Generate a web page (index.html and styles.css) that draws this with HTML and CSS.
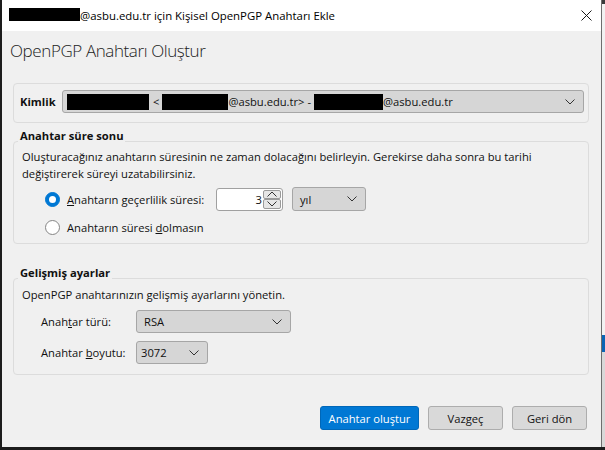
FILE: index.html
```html
<!DOCTYPE html>
<html lang="tr">
<head>
  <meta charset="UTF-8">
  <title>OpenPGP Anahtarı Oluştur</title>
  <link rel="stylesheet" href="styles.css">
</head>
<body>
<div class="screen">
  <div class="window">

    <!-- Title bar -->
    <div class="titlebar">
      <span class="redact redact-title"></span>
      <span class="title">@asbu.edu.tr için Kişisel OpenPGP Anahtarı Ekle</span>
      <svg class="close" width="11" height="11" viewBox="0 0 11 11">
        <path d="M0.5 0.5 L10.5 10.5 M10.5 0.5 L0.5 10.5" stroke="#1a1a1a" stroke-width="1"/>
      </svg>
    </div>

    <div class="dialog">
      <h1>OpenPGP Anahtarı Oluştur</h1>

      <!-- Identity -->
      <div class="group identity">
        <span class="identity-label">Kimlik</span>
        <div class="select identity-select">
          <span class="redact redact-name"></span>
          <span class="lt">&lt;</span>
          <span class="redact redact-user"></span>
          <span>@asbu.edu.tr&gt; -</span>
          <span class="redact redact-user2"></span>
          <span>@asbu.edu.tr</span>
          <svg class="chevron" width="10" height="6" viewBox="0 0 10 6"><path d="M0.5 0.5 L5 5 L9.5 0.5" fill="none" stroke="#333" stroke-width="1"/></svg>
        </div>
      </div>

      <!-- Expiry -->
      <div class="section-title">Anahtar süre sonu</div>
      <div class="group expiry">
        <p>Oluşturacağınız anahtarın süresinin ne zaman dolacağını belirleyin. Gerekirse daha sonra bu tarihi<br>değiştirerek süreyi uzatabilirsiniz.</p>
        <div class="radio-row first">
          <span class="radio checked"><span class="dot"></span></span>
          <span class="radio-label"><u>A</u>nahtarın geçerlilik süresi:</span>
          <div class="number">
            <span class="number-value">3</span>
            <span class="spin">
              <span class="spin-btn"><svg width="10" height="6" viewBox="0 0 10 6"><path d="M0.5 5.5 L5 1 L9.5 5.5" fill="none" stroke="#333" stroke-width="1"/></svg></span>
              <span class="spin-btn"><svg width="10" height="6" viewBox="0 0 10 6"><path d="M0.5 0.5 L5 5 L9.5 0.5" fill="none" stroke="#333" stroke-width="1"/></svg></span>
            </span>
          </div>
          <div class="select unit-select">
            <span>yıl</span>
            <svg class="chevron" width="10" height="6" viewBox="0 0 10 6"><path d="M0.5 0.5 L5 5 L9.5 0.5" fill="none" stroke="#333" stroke-width="1"/></svg>
          </div>
        </div>
        <div class="radio-row second">
          <span class="radio"></span>
          <span>Anahtarın süresi <u>d</u>olmasın</span>
        </div>
      </div>

      <!-- Advanced -->
      <div class="section-title advanced-title">Gelişmiş ayarlar</div>
      <div class="group advanced">
        <p>OpenPGP anahtarınızın gelişmiş ayarlarını yönetin.</p>
        <div class="field-row">
          <span class="field-label">Anah<u>t</u>ar türü:</span>
          <div class="select type-select">
            <span>RSA</span>
            <svg class="chevron" width="10" height="6" viewBox="0 0 10 6"><path d="M0.5 0.5 L5 5 L9.5 0.5" fill="none" stroke="#333" stroke-width="1"/></svg>
          </div>
        </div>
        <div class="field-row">
          <span class="field-label">Anahtar <u>b</u>oyutu:</span>
          <div class="select size-select">
            <span>3072</span>
            <svg class="chevron" width="10" height="6" viewBox="0 0 10 6"><path d="M0.5 0.5 L5 5 L9.5 0.5" fill="none" stroke="#333" stroke-width="1"/></svg>
          </div>
        </div>
      </div>

      <!-- Buttons -->
      <div class="buttons">
        <button class="btn btn-primary">Anahtar oluştur</button>
        <button class="btn btn-cancel">Vazgeç</button>
        <button class="btn btn-back">Geri dön</button>
      </div>
    </div>
  </div>

  <!-- whatever is behind the dialog -->
  <div class="backdrop">
    <div class="backdrop-top"></div>
    <div class="backdrop-blue"></div>
    <div class="backdrop-rest"></div>
  </div>
</div>
</body>
</html>
```

FILE: styles.css
```css
body {
  margin: 0;
  background: #1c1c1c;
  font-family: "Open Sans", "Noto Sans", sans-serif;
  font-size: 11.2px;
  color: #111;
}

.screen {
  display: flex;
  height: 450px;
  overflow: hidden;
}

.window {
  margin-left: 2px;
  width: 599px;
  height: 447px;
  border-right: 1px solid #6e6e6e;
  background: #f0f0f0;
  display: flex;
  flex-direction: column;
}

.backdrop {
  flex: 1;
  height: 447px;
  display: flex;
  flex-direction: column;
}

.backdrop-top {
  height: 331px;
  background: #f2f2f2;
  border-top: 4px solid #3a3a3a;
}

.backdrop-blue {
  height: 17px;
  background: #0a64b4;
}

.backdrop-rest {
  flex: 1;
  background: #d8d8d8;
}

/* title bar */
.titlebar {
  height: 31px;
  flex-shrink: 0;
  background: #fff;
  display: flex;
  align-items: center;
  padding-left: 7px;
  font-size: 11.4px;
}

.title {
  color: #000;
}

.close {
  margin-left: auto;
  margin-right: 9px;
}

.redact {
  display: inline-block;
  background: #000;
  height: 16px;
  flex-shrink: 0;
}

.redact-title {
  width: 71px;
  height: 13px;
  margin-top: -2px;
}

/* dialog body */
.dialog {
  flex: 1;
  padding: 0 12px 0 11px;
}

h1 {
  margin: 8px 0 0 -3px;
  font-size: 17px;
  font-weight: 300;
  line-height: 24px;
  letter-spacing: -0.4px;
  color: #222;
}

p {
  margin: 0;
  line-height: 17px;
}

.group {
  border: 1px solid #dcdcdc;
  border-radius: 4px;
}

.section-title {
  width: fit-content;
  margin: 5px 0 -3px 5px;
  padding: 0 2px;
  background: #f0f0f0;
  font-weight: bold;
  line-height: 16px;
  position: relative;
}

.advanced-title {
  margin-top: 21px;
}

.identity {
  margin-top: 20px;
  display: flex;
  align-items: center;
  padding: 6px 4px 9px 6px;
}

.identity-label {
  width: 42px;
  font-weight: bold;
}

.select {
  display: flex;
  align-items: center;
  height: 23px;
  box-sizing: border-box;
  border: 1px solid #a6a6a6;
  border-radius: 3px;
  background: #d6d6d6;
  padding: 0 8px 0 7px;
}

.chevron {
  margin-left: auto;
}

.identity-select {
  flex: 1;
  padding-left: 4px;
}

.redact-name {
  width: 82px;
  margin-right: 4px;
}

.lt {
  margin-right: 3px;
}

.redact-user {
  width: 66px;
}

.redact-user2 {
  width: 69px;
  margin-left: 3px;
}

/* expiry */
.expiry {
  padding: 6px 8px 6px 8px;
}

.radio-row {
  display: flex;
  align-items: center;
  margin-left: 23px;
}

.radio-row.first {
  height: 24px;
  margin-top: 5px;
}

.radio-row.second {
  height: 20px;
  margin-top: 6px;
}

.radio {
  width: 15px;
  height: 15px;
  box-sizing: border-box;
  border: 1px solid #858585;
  border-radius: 50%;
  background: #fff;
  margin-right: 7px;
  display: flex;
  align-items: center;
  justify-content: center;
}

.radio.checked {
  background: #0078d4;
  border-color: #0078d4;
}

.radio .dot {
  width: 7px;
  height: 7px;
  border-radius: 50%;
  background: #fff;
}

.radio-label {
  width: 149px;
}

.number {
  width: 67px;
  height: 23px;
  box-sizing: border-box;
  border: 1px solid #a0a0a0;
  border-radius: 3px;
  background: #fff;
  display: flex;
  align-items: center;
  justify-content: flex-end;
  padding-right: 1px;
}

.spin {
  display: flex;
  flex-direction: column;
  width: 18px;
  height: 19px;
  margin-left: 1px;
}

.spin-btn {
  flex: 1;
  border: 1px solid #9a9a9a;
  border-radius: 2px;
  background: #e6e6e6;
  display: flex;
  align-items: center;
  justify-content: center;
}

.unit-select {
  width: 74px;
  height: 24px;
  margin-left: 9px;
}

/* advanced */
.advanced {
  padding: 7px 8px 10px 8px;
}

.field-row {
  display: flex;
  align-items: center;
  margin-left: 19px;
  margin-top: 8px;
}

.advanced p + .field-row {
  margin-top: 7px;
}

.field-label {
  width: 95px;
}

.type-select {
  width: 155px;
}

.size-select {
  width: 72px;
  padding-left: 4px;
}

/* buttons */
.buttons {
  display: flex;
  justify-content: flex-end;
  gap: 9px;
  margin: 31px 2px 0 0;
}

.btn {
  height: 24px;
  box-sizing: border-box;
  border: 1px solid #adadad;
  border-radius: 3px;
  background: #d9d9d9;
  font: inherit;
  color: #111;
  padding: 0;
}

.btn-primary {
  width: 99px;
  background: #0078d4;
  border-color: #0067b8;
  color: #fff;
}

.btn-cancel,
.btn-back {
  width: 75px;
}
```
